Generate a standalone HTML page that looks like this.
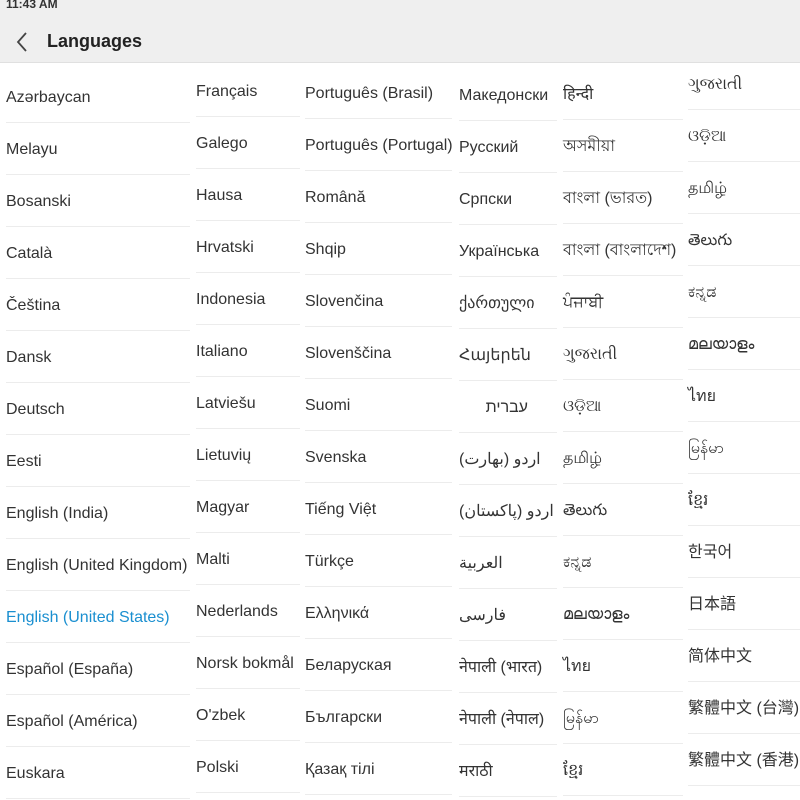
<!DOCTYPE html>
<html><head><meta charset="utf-8"><style>
body{margin:0;width:800px;height:800px;overflow:hidden;background:#fff;font-family:"Liberation Sans","Noto Sans CJK SC",sans-serif;color:#333;position:relative}
.top{position:absolute;left:0;top:0;width:800px;height:62px;background:#efefef;border-bottom:1px solid #e0e0e0;z-index:2}
.time{position:absolute;left:6px;top:-3px;font-size:12px;font-weight:bold;color:#333}
.title{position:absolute;left:47px;top:31px;font-size:18px;font-weight:bold;color:#222}
.col{position:absolute}
.col div{height:51px;border-bottom:1px solid #ececec;line-height:53px;font-size:16px;white-space:nowrap;overflow:visible}
.sel{color:#1a8fd0}
</style></head><body>
<div class="top"><div class="time">11:43 AM</div>
<svg style="position:absolute;left:14px;top:31px" width="16" height="22"><path d="M12 2 L4 11 L12 20" fill="none" stroke="#444" stroke-width="1.8"/></svg>
<div class="title">Languages</div></div>

<div class="col" style="left:6px;top:71px;width:184px">
<div>Azərbaycan</div><div>Melayu</div><div>Bosanski</div><div>Català</div><div>Čeština</div><div>Dansk</div><div>Deutsch</div><div>Eesti</div><div>English (India)</div><div>English (United Kingdom)</div><div class="sel">English (United States)</div><div>Español (España)</div><div>Español (América)</div><div>Euskara</div></div>

<div class="col" style="left:196px;top:65px;width:104px">
<div>Français</div><div>Galego</div><div>Hausa</div><div>Hrvatski</div><div>Indonesia</div><div>Italiano</div><div>Latviešu</div><div>Lietuvių</div><div>Magyar</div><div>Malti</div><div>Nederlands</div><div>Norsk bokmål</div><div>O'zbek</div><div>Polski</div></div>

<div class="col" style="left:305px;top:67px;width:147px">
<div>Português (Brasil)</div><div>Português (Portugal)</div><div>Română</div><div>Shqip</div><div>Slovenčina</div><div>Slovenščina</div><div>Suomi</div><div>Svenska</div><div>Tiếng Việt</div><div>Türkçe</div><div>Ελληνικά</div><div>Беларуская</div><div>Български</div><div>Қазақ тілі</div></div>

<div class="col" style="left:459px;top:69px;width:98px">
<div>Македонски</div><div>Русский</div><div>Српски</div><div>Українська</div><div>ქართული</div><div>Հայերեն</div><div>&nbsp;&nbsp;&nbsp;&nbsp;&nbsp;&nbsp;עברית</div><div>اردو (بھارت)</div><div>اردو (پاکستان)</div><div>العربية</div><div>فارسی</div><div>नेपाली (भारत)</div><div>नेपाली (नेपाल)</div><div>मराठी</div></div>

<div class="col" style="left:563px;top:68px;width:120px">
<div>हिन्दी</div><div>অসমীয়া</div><div>বাংলা (ভারত)</div><div>বাংলা (বাংলাদেশ)</div><div>ਪੰਜਾਬੀ</div><div>ગુજરાતી</div><div>ଓଡ଼ିଆ</div><div>தமிழ்</div><div>తెలుగు</div><div>ಕನ್ನಡ</div><div>മലയാളം</div><div>ไทย</div><div>မြန်မာ</div><div>ខ្មែរ</div></div>

<div class="col" style="left:688px;top:58px;width:112px">
<div>ગુજરાતી</div><div>ଓଡ଼ିଆ</div><div>தமிழ்</div><div>తెలుగు</div><div>ಕನ್ನಡ</div><div>മലയാളം</div><div>ไทย</div><div>မြန်မာ</div><div>ខ្មែរ</div><div>한국어</div><div>日本語</div><div>简体中文</div><div>繁體中文 (台灣)</div><div>繁體中文 (香港)</div></div>
</body></html>
